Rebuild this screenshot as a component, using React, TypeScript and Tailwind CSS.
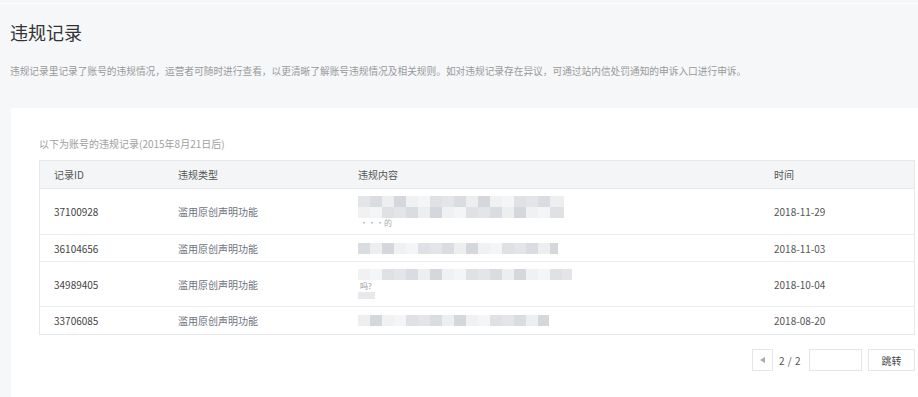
import React from 'react';

type Row = {
  id: string;
  type: string;
  time: string;
  h: string;
  blur: React.ReactNode;
};

const shades = ['#e3e5e8', '#d9dce0', '#eceef0', '#d4d7dc', '#f0f1f3', '#f4f5f6', '#dfe1e5'];

function Mosaic({ widths, offset = 0 }: { widths: number[]; offset?: number }) {
  return (
    <div className="flex h-[11px]">
      {widths.map((w, i) => (
        <div key={i} className="h-full" style={{ width: w, background: shades[(i + offset) % shades.length] }} />
      ))}
    </div>
  );
}

const rows: Row[] = [
  {
    id: '37100928',
    type: '滥用原创声明功能',
    time: '2018-11-29',
    h: 'h-[46px]',
    blur: (
      <div className="flex flex-col">
        <Mosaic widths={[12, 12, 12, 12, 12, 12, 12, 12, 12, 12, 12, 12, 12, 12, 12, 12, 14]} />
        <Mosaic widths={[12, 12, 12, 12, 12, 12, 12, 12, 12, 12, 12, 12, 12, 12, 12, 12, 14]} offset={4} />
        <div className="text-[8px] leading-[10px] text-[#aaa] pl-[2px]">···的</div>
      </div>
    ),
  },
  {
    id: '36104656',
    type: '滥用原创声明功能',
    time: '2018-11-03',
    h: 'h-[27px]',
    blur: <Mosaic widths={[12, 12, 12, 12, 12, 12, 12, 12, 12, 12, 12, 12, 12, 12, 12, 12, 8]} offset={1} />,
  },
  {
    id: '34989405',
    type: '滥用原创声明功能',
    time: '2018-10-04',
    h: 'h-[45px]',
    blur: (
      <div className="flex flex-col gap-[2px]">
        <Mosaic widths={[12, 12, 12, 12, 12, 12, 12, 12, 12, 12, 12, 12, 12, 12, 12, 12, 12, 10]} offset={4} />
        <div className="text-[8px] leading-[8px] text-[#999] pl-[2px]">吗?</div>
        <div className="w-[17px] h-[7px] bg-[#e6e8eb]" />
      </div>
    ),
  },
  {
    id: '33706085',
    type: '滥用原创声明功能',
    time: '2018-08-20',
    h: 'h-[27px]',
    blur: <Mosaic widths={[12, 12, 12, 12, 12, 12, 12, 12, 12, 12, 12, 12, 12, 12, 12, 11]} offset={2} />,
  },
];

export default function App() {
  return (
    <div
      className="w-[918px] h-[397px] overflow-hidden bg-[#f6f7f9] pt-[3px] text-[#333]"
      style={{ fontFamily: '"Noto Sans CJK SC", "Microsoft YaHei", sans-serif' }}
    >
      {/* Header */}
      <div className="h-[105px] px-[10px] bg-[#f6f7f9] border-t border-white">
        <h1 className="pt-[16px] text-[18px] leading-[24px] font-normal text-[#333]">违规记录</h1>
        <p className="mt-[20px] text-[9.7px] leading-[14px] text-[#999] whitespace-nowrap">
          违规记录里记录了账号的违规情况，运营者可随时进行查看，以更清晰了解账号违规情况及相关规则。如对违规记录存在异议，可通过站内信处罚通知的申诉入口进行申诉。
        </p>
      </div>

      {/* Card */}
      <div className="ml-[11px] bg-white h-[300px] pl-[28px] pr-[4px] pt-[29px]">
        <p className="text-[10px] leading-[14px] text-[#a0a0a0]">以下为账号的违规记录(2015年8月21日后)</p>

        <div className="mt-[9px] border border-[#e7e8eb] w-[876px]">
          <div className="flex items-center h-[28px] bg-[#f4f5f7] text-[10px] text-[#555] border-b border-[#e7e8eb]">
            <div className="w-[138px] pl-[14px]">记录ID</div>
            <div className="w-[180px]">违规类型</div>
            <div className="w-[416px]">违规内容</div>
            <div className="flex-1">时间</div>
          </div>
          {rows.map((r, i) => (
            <div
              key={r.id}
              className={`flex items-center ${r.h} text-[10px] ${i < rows.length - 1 ? 'border-b border-[#ebecee]' : ''}`}
            >
              <div className="w-[138px] pl-[14px] text-[#444]">{r.id}</div>
              <div className="w-[180px] text-[#6d7380]">{r.type}</div>
              <div className="w-[416px]">{r.blur}</div>
              <div className="flex-1 text-[#555]">{r.time}</div>
            </div>
          ))}
        </div>

        {/* Pagination */}
        <div className="flex items-center justify-end mt-[14px] w-[876px] text-[10px] text-[#555]">
          <button className="w-[21px] h-[22px] border border-[#e4e6e9] flex items-center justify-center">
            <svg width="5" height="6" viewBox="0 0 5 6">
              <path d="M5 0 L0 3 L5 6 Z" fill="#aaa" />
            </svg>
          </button>
          <span className="ml-[6px] w-[30px] tracking-[0.5px]">2 / 2</span>
          <div className="w-[53px] h-[22px] border border-[#e4e6e9] bg-white" />
          <button className="ml-[6px] w-[47px] h-[22px] border border-[#e4e6e9] text-[#444]">跳转</button>
        </div>
      </div>
    </div>
  );
}
